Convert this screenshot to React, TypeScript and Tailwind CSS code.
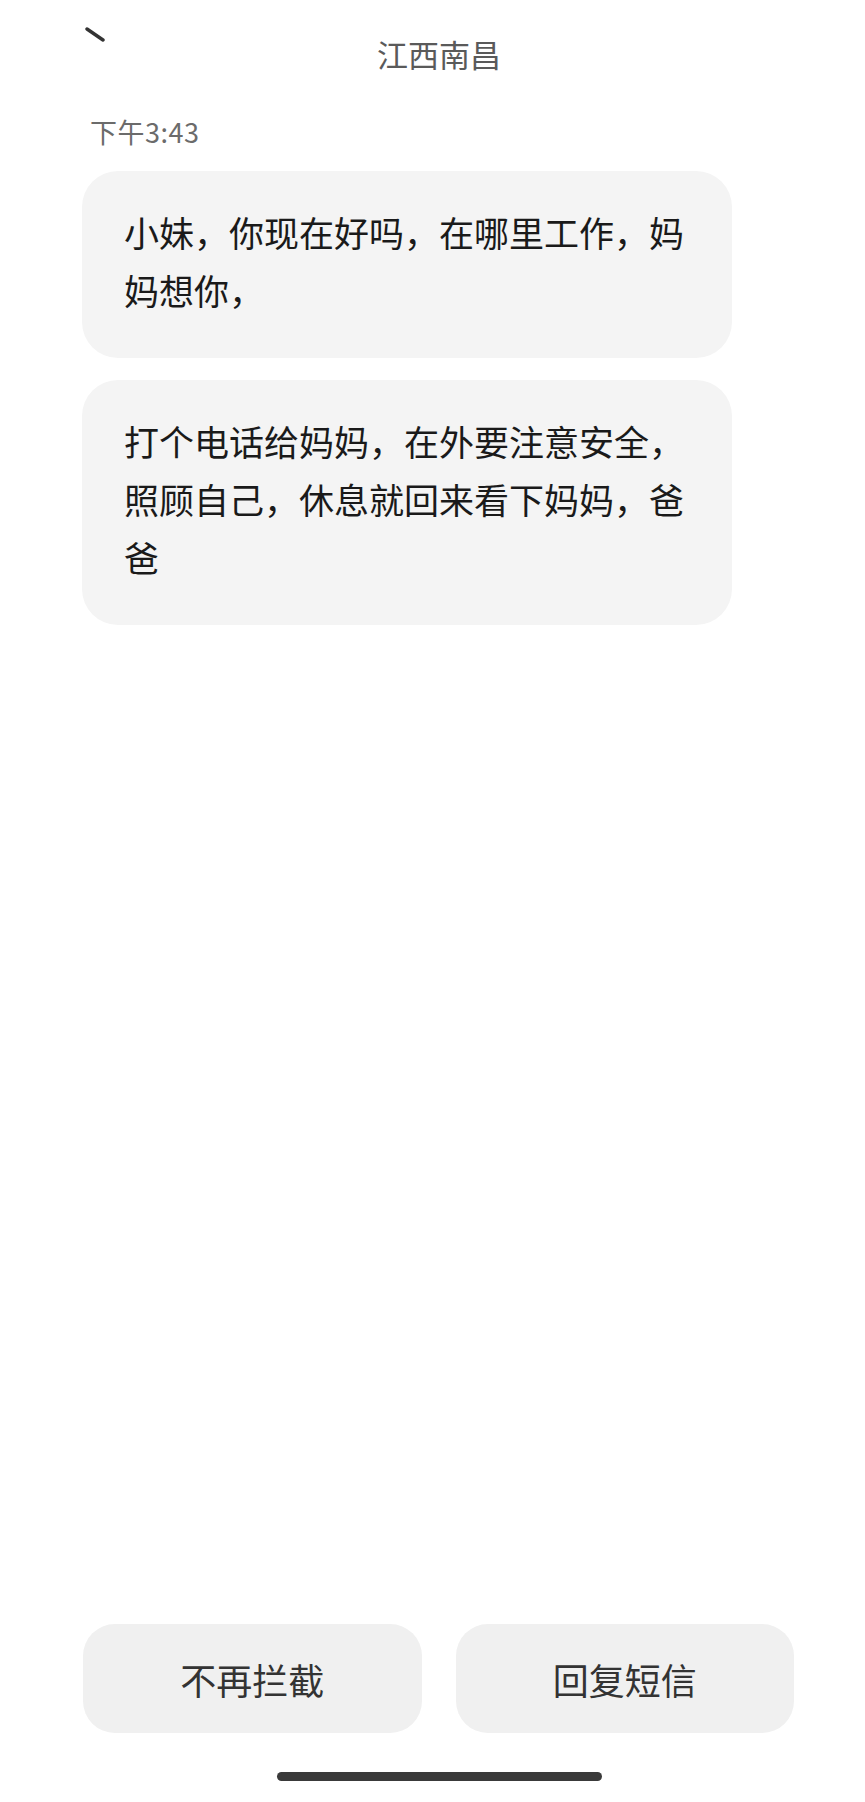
export default function App() {
  const messages = [
    '小妹，你现在好吗，在哪里工作，妈妈想你，',
    '打个电话给妈妈，在外要注意安全，照顾自己，休息就回来看下妈妈，爸爸',
  ];

  return (
    <div className="flex min-h-[1802px] w-full flex-col bg-white font-['Noto_Sans_CJK_SC',sans-serif]">
      {/* header */}
      <div className="grid grid-cols-[1fr_auto_1fr] items-start pl-[13px]">
        <div>
          <svg className="ml-[72px] mt-[27px]" width="22" height="16" viewBox="0 0 22 16">
            <line x1="2" y1="2" x2="18" y2="13" stroke="#333" strokeWidth="3.4" strokeLinecap="round" />
          </svg>
        </div>
        <div className="mt-[34px] text-[31px] leading-[40px] text-[#5a5a5a]">江西南昌</div>
        <div />
      </div>

      <div className="ml-[90px] mt-[40px] text-[27px] leading-[36px] tracking-[0.5px] text-[#6b6b6b]">下午3:43</div>

      <div className="ml-[82px] mt-[21px] flex w-[650px] flex-col gap-[22px]">
        {messages.map((m) => (
          <div key={m} className="rounded-[36px] bg-[#f4f4f4] pb-[39px] pl-[42px] pr-[42px] pt-[32px] text-[35px] leading-[58px] text-[#1a1a1a]">
            {m}
          </div>
        ))}
      </div>

      {/* actions */}
      <div className="mt-auto flex gap-[34px] pl-[83px] pr-[71px]">
        <button className="flex h-[109px] flex-1 items-center justify-center rounded-[32px] bg-[#f0f0f0] text-[36px] text-[#333]">不再拦截</button>
        <button className="flex h-[109px] flex-1 items-center justify-center rounded-[32px] bg-[#f0f0f0] text-[36px] text-[#333]">回复短信</button>
      </div>

      <div className="mt-[39px] flex justify-center pb-[21px] pl-[14px]">
        <div className="h-[9px] w-[325px] rounded-full bg-[#3a3a3a]" />
      </div>
    </div>
  );
}
